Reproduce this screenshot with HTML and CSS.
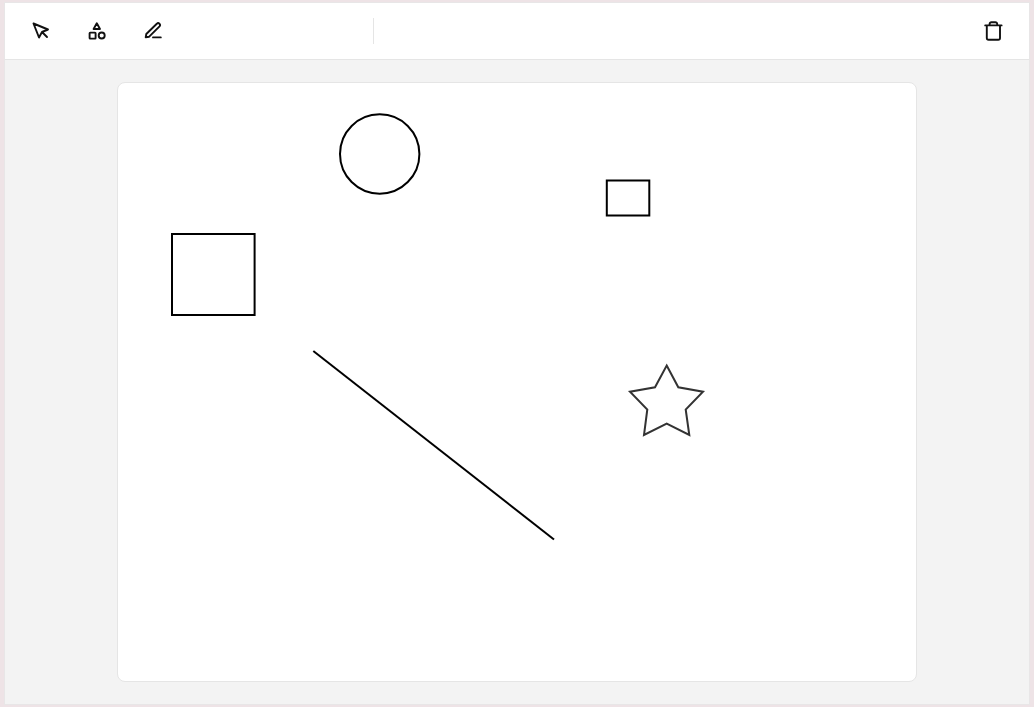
FILE: index.html
```html
<!DOCTYPE html>
<html lang="en">
  <head>
    <meta charset="UTF-8" />
    <meta name="viewport" content="width=device-width, initial-scale=1.0" />
    <title>Sketch</title>
    <link rel="stylesheet" href="styles.css">
  </head>
  <body>
    <div class="app">
      <div class="toolbar">
        <div class="tools">
          <button class="tool" aria-label="Select">
            <svg viewBox="0 0 20 20" class="icon"><path d="M2.500 2.500 L17 8.500 L11 11 L8 16.500 Z M11 11 L16 16"/></svg>
          </button>
          <button class="tool" aria-label="Shapes">
            <svg viewBox="0 0 20 20" class="icon"><path d="M9.800 2.300 L13 8 H6.600 Z"/><rect x="2.600" y="11.600" width="6" height="6" rx="0.600"/><circle cx="14.700" cy="14.500" r="3"/></svg>
          </button>
          <button class="tool" aria-label="Draw">
            <svg viewBox="0 0 20 20" class="icon"><path d="M2.700 16.300 L3.300 13 L13.800 2.800 A1.700 1.700 0 0 1 16.500 5.300 L6.200 15.700 Z M10 16.400 H17.800"/></svg>
          </button>
        </div>
        <div class="divider"></div>
        <button class="tool" aria-label="Delete">
          <svg viewBox="0 0 20 20" class="icon"><path d="M2.200 4.400 H18.600 M3.800 4.400 V17 A1.800 1.800 0 0 0 5.600 18.800 H15.200 A1.800 1.800 0 0 0 17 17 V4.400 M6.600 4.400 V3 A1.800 1.800 0 0 1 8.400 1.200 H12.400 A1.800 1.800 0 0 1 14.200 3 V4.400"/></svg>
        </button>
      </div>
      <div class="stage">
        <div class="paper">
          <svg class="drawing" viewBox="118 83 798 598">
            <circle cx="379.700" cy="154" r="39.700"/>
            <rect x="172" y="234" width="82.600" height="81"/>
            <rect x="606.800" y="180.500" width="42.500" height="35"/>
            <line x1="313.300" y1="351" x2="554" y2="539.500"/>
            <polygon class="star" points="666.700,365.500 678.300,387.300 703,391.700 685.700,409.500 689.300,435 666.700,423.500 644,435 647.300,409.500 630,391.700 655,387.300"/>
          </svg>
        </div>
      </div>
    </div>
  </body>
</html>
```

FILE: styles.css
```css
* {
  margin: 0;
  padding: 0;
  box-sizing: border-box;
}

html, body {
  height: 100%;
}

body {
  background: #eee3e6;
  padding: 3px 5px;
  overflow: hidden;
}

.app {
  height: 100%;
  display: flex;
  flex-direction: column;
  background: #f3f3f3;
  box-shadow: 0 0 0 1px #e8e6e7;
}

/* Top bar */
.toolbar {
  height: 57px;
  flex-shrink: 0;
  display: flex;
  align-items: center;
  padding: 0 18px;
  background: #fff;
  border-bottom: 1px solid #e5e5e5;
}

.tools {
  width: 350px;
  display: flex;
  gap: 20px;
}

.tool {
  width: 36px;
  height: 36px;
  display: flex;
  align-items: center;
  justify-content: center;
  background: none;
  border: none;
}

.icon {
  width: 20px;
  height: 20px;
  fill: none;
  stroke: #111;
  stroke-width: 1.900;
  stroke-linecap: round;
  stroke-linejoin: round;
}

.divider {
  width: 1px;
  height: 26px;
  background: #e5e5e5;
  margin-right: auto;
}

/* Canvas */
.stage {
  flex: 1;
  display: flex;
  justify-content: center;
  padding-top: 22px;
}

.paper {
  width: 800px;
  height: 600px;
  background: #fff;
  border: 1px solid #e5e5e5;
  border-radius: 8px;
}

.drawing {
  display: block;
  width: 798px;
  height: 598px;
  fill: none;
  stroke: #000;
  stroke-width: 2;
}

.star {
  stroke: #333;
}
```
